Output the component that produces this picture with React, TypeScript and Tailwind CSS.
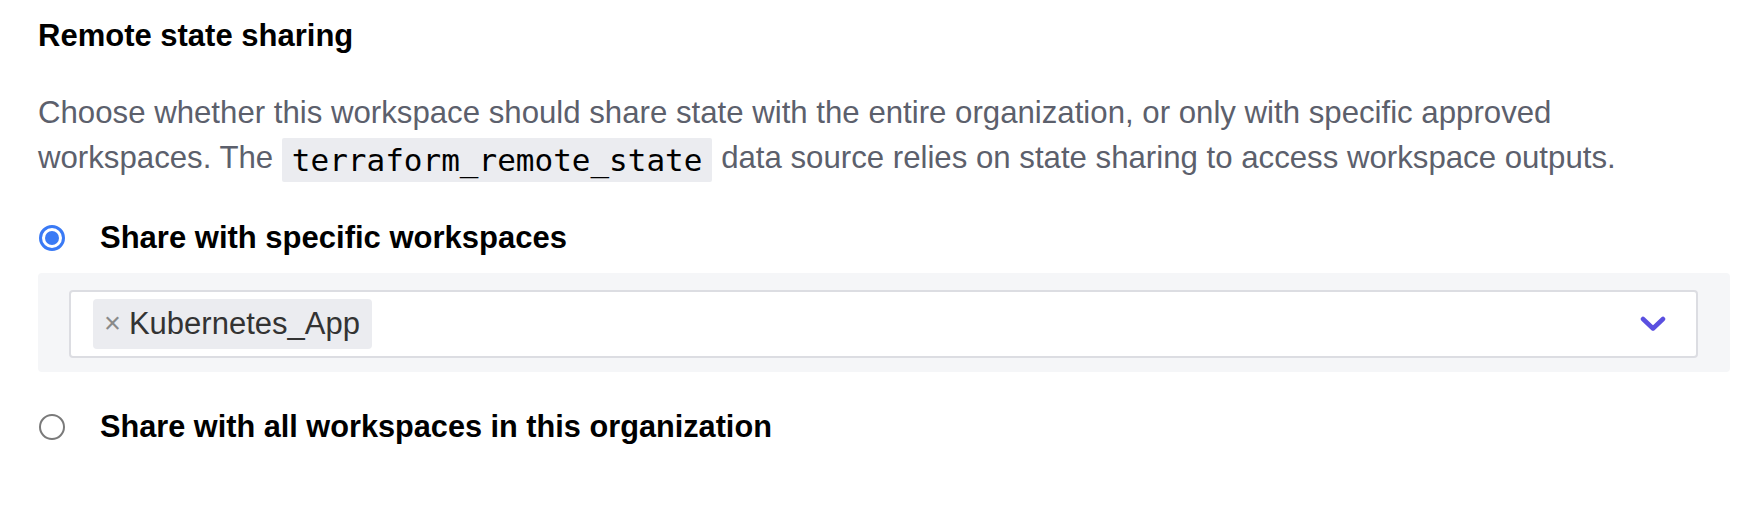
import { useState } from 'react'

const sans = { fontFamily: '"Liberation Sans", Arial, sans-serif' }

function Radio({ checked }: { checked: boolean }) {
  return checked ? (
    <span className="flex h-[26px] w-[26px] shrink-0 items-center justify-center rounded-full border-[3px] border-[#3a7af5] bg-white">
      <span className="h-[14px] w-[14px] rounded-full bg-[#3a7af5]" />
    </span>
  ) : (
    <span className="h-[26px] w-[26px] shrink-0 rounded-full border-[2px] border-[#7a7a7a] bg-white" />
  )
}

export default function App() {
  const [mode, setMode] = useState<'specific' | 'all'>('specific')
  const [tags, setTags] = useState(['Kubernetes_App'])

  return (
    <div className="h-[512px] w-[1760px] bg-white pl-[38px] pt-[18px]" style={sans}>
      <h2 className="text-[31px] font-bold leading-[36px] text-black">Remote state sharing</h2>

      <p className="mt-[36px] max-w-[1620px] text-[31.2px] leading-[45px] text-[#5c606c]">
        Choose whether this workspace should share state with the entire organization, or only with specific approved
        workspaces. The{' '}
        <code
          className="inline-block h-[44px] rounded-[2px] bg-[#ebecf0] px-[10px] align-middle text-[31px] leading-[44px] text-black"
          style={{ fontFamily: '"DejaVu Sans Mono", "Liberation Mono", monospace' }}
        >
          terraform_remote_state
        </code>{' '}
        data source relies on state sharing to access workspace outputs.
      </p>

      {/* specific workspaces */}
      <label
        className="mt-[34px] flex h-[45px] cursor-pointer items-center gap-[35px] pl-[1px]"
        onClick={() => setMode('specific')}
      >
        <Radio checked={mode === 'specific'} />
        <span className="text-[31px] font-bold text-black">Share with specific workspaces</span>
      </label>

      <div className="mt-[12px] w-[1692px] rounded-[4px] bg-[#f5f6f8] pb-[14px] pl-[31px] pr-[32px] pt-[17px]">
        <div className="flex h-[68px] items-center rounded-[4px] border-[2px] border-[#dcdde2] bg-white pl-[22px] pr-[30px]">
          <div className="flex flex-1 items-center gap-2">
            {tags.map((t) => (
              <span
                key={t}
                className="flex h-[50px] items-center rounded-[4px] bg-[#ebecf0] pl-[11px] pr-[12px] text-[31px] text-[#333]"
              >
                <button
                  className="mr-[8px] text-[29px] leading-none text-[#8a8a8a]"
                  onClick={() => setTags(tags.filter((x) => x !== t))}
                >
                  ×
                </button>
                {t}
              </span>
            ))}
          </div>
          <svg width="26" height="16" viewBox="0 0 26 16" fill="none">
            <path
              d="M3 3l10 9.5L23 3"
              stroke="#5a4fe0"
              strokeWidth="4.5"
              strokeLinecap="round"
              strokeLinejoin="round"
            />
          </svg>
        </div>
      </div>

      {/* all workspaces */}
      <label
        className="mt-[33px] flex h-[45px] cursor-pointer items-center gap-[35px] pl-[1px]"
        onClick={() => setMode('all')}
      >
        <Radio checked={mode === 'all'} />
        <span className="text-[30.7px] font-bold text-black">Share with all workspaces in this organization</span>
      </label>
    </div>
  )
}
